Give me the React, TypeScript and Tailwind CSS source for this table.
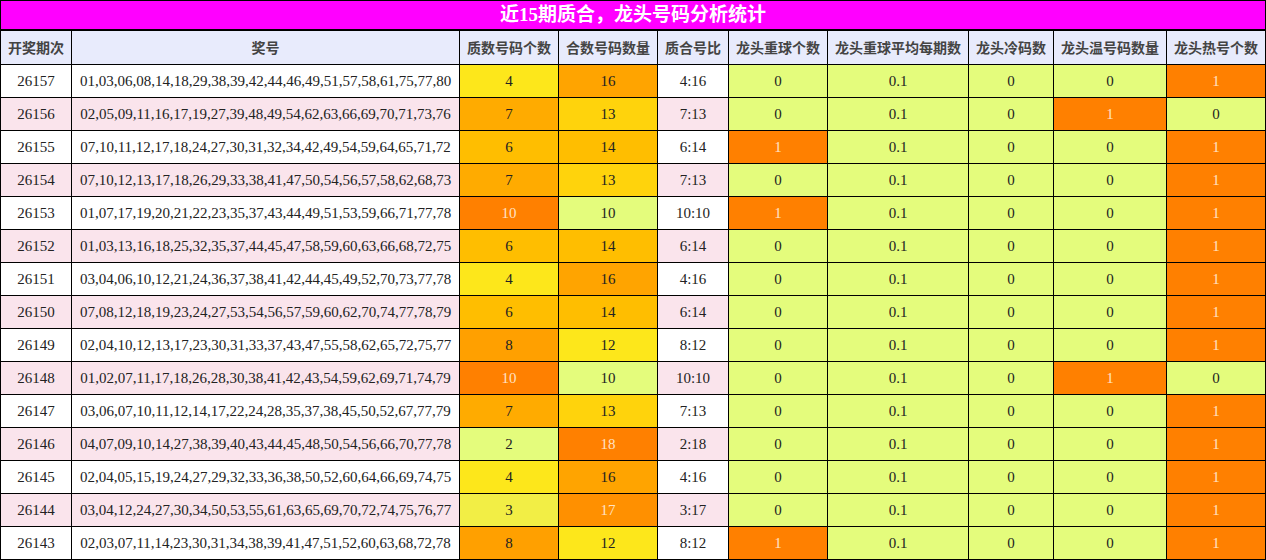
import React from 'react';

type Row = {
  issue: string;
  nums: string;
  prime: number;
  comp: number;
  hot: number; // 龙头重球个数
  warm: number; // 龙头温号码数量
  heat: number; // 龙头热号个数
};

const rows: Row[] = [
  { issue: '26157', nums: '01,03,06,08,14,18,29,38,39,42,44,46,49,51,57,58,61,75,77,80', prime: 4, comp: 16, hot: 0, warm: 0, heat: 1 },
  { issue: '26156', nums: '02,05,09,11,16,17,19,27,39,48,49,54,62,63,66,69,70,71,73,76', prime: 7, comp: 13, hot: 0, warm: 1, heat: 0 },
  { issue: '26155', nums: '07,10,11,12,17,18,24,27,30,31,32,34,42,49,54,59,64,65,71,72', prime: 6, comp: 14, hot: 1, warm: 0, heat: 1 },
  { issue: '26154', nums: '07,10,12,13,17,18,26,29,33,38,41,47,50,54,56,57,58,62,68,73', prime: 7, comp: 13, hot: 0, warm: 0, heat: 1 },
  { issue: '26153', nums: '01,07,17,19,20,21,22,23,35,37,43,44,49,51,53,59,66,71,77,78', prime: 10, comp: 10, hot: 1, warm: 0, heat: 1 },
  { issue: '26152', nums: '01,03,13,16,18,25,32,35,37,44,45,47,58,59,60,63,66,68,72,75', prime: 6, comp: 14, hot: 0, warm: 0, heat: 1 },
  { issue: '26151', nums: '03,04,06,10,12,21,24,36,37,38,41,42,44,45,49,52,70,73,77,78', prime: 4, comp: 16, hot: 0, warm: 0, heat: 1 },
  { issue: '26150', nums: '07,08,12,18,19,23,24,27,53,54,56,57,59,60,62,70,74,77,78,79', prime: 6, comp: 14, hot: 0, warm: 0, heat: 1 },
  { issue: '26149', nums: '02,04,10,12,13,17,23,30,31,33,37,43,47,55,58,62,65,72,75,77', prime: 8, comp: 12, hot: 0, warm: 0, heat: 1 },
  { issue: '26148', nums: '01,02,07,11,17,18,26,28,30,38,41,42,43,54,59,62,69,71,74,79', prime: 10, comp: 10, hot: 0, warm: 1, heat: 0 },
  { issue: '26147', nums: '03,06,07,10,11,12,14,17,22,24,28,35,37,38,45,50,52,67,77,79', prime: 7, comp: 13, hot: 0, warm: 0, heat: 1 },
  { issue: '26146', nums: '04,07,09,10,14,27,38,39,40,43,44,45,48,50,54,56,66,70,77,78', prime: 2, comp: 18, hot: 0, warm: 0, heat: 1 },
  { issue: '26145', nums: '02,04,05,15,19,24,27,29,32,33,36,38,50,52,60,64,66,69,74,75', prime: 4, comp: 16, hot: 0, warm: 0, heat: 1 },
  { issue: '26144', nums: '03,04,12,24,27,30,34,50,53,55,61,63,65,69,70,72,74,75,76,77', prime: 3, comp: 17, hot: 0, warm: 0, heat: 1 },
  { issue: '26143', nums: '02,03,07,11,14,23,30,31,34,38,39,41,47,51,52,60,63,68,72,78', prime: 8, comp: 12, hot: 1, warm: 0, heat: 1 },
];

const LIGHT = 'bg-[#e4fc7c] text-[#222]';
const MAX = 'bg-[#ff8000] text-[#ffe2c4]';

const primeColor: Record<number, string> = {
  2: LIGHT,
  3: 'bg-[#f2ee45] text-[#222]',
  4: 'bg-[#fde71b] text-[#222]',
  6: 'bg-[#ffbe00] text-[#222]',
  7: 'bg-[#ffab00] text-[#222]',
  8: 'bg-[#ffa000] text-[#222]',
  10: MAX,
};

const compColor: Record<number, string> = {
  10: LIGHT,
  12: 'bg-[#fde71b] text-[#222]',
  13: 'bg-[#ffd30c] text-[#222]',
  14: 'bg-[#ffbe00] text-[#222]',
  16: 'bg-[#ffa400] text-[#222]',
  17: 'bg-[#ff9000] text-[#ffe2c4]',
  18: MAX,
};

const flag = (v: number) => (v ? MAX : LIGHT);

const headers = [
  '开奖期次',
  '奖号',
  '质数号码个数',
  '合数号码数量',
  '质合号比',
  '龙头重球个数',
  '龙头重球平均每期数',
  '龙头冷码数',
  '龙头温号码数量',
  '龙头热号个数',
];

const widths = [71, 388, 99, 99, 71, 99, 141, 85, 113, 99];

export default function App() {
  return (
    <div className="w-[1266px] h-[560px] bg-white overflow-hidden">
      <table className="table-fixed border-collapse w-[1266px] font-['Liberation_Serif','Noto_Sans_CJK_SC',serif] text-[15px] text-[#222]">
        <colgroup>
          {widths.map((w, i) => (
            <col key={i} style={{ width: w }} />
          ))}
        </colgroup>
        <thead>
          <tr className="h-[29px]">
            <th
              colSpan={10}
              className="bg-[#ff00ff] border border-black border-b-2 p-0 text-white text-[19px] font-bold leading-none"
            >
              近15期质合，龙头号码分析统计
            </th>
          </tr>
          <tr className="h-[35px] bg-[#e8ebfc]">
            {headers.map((h) => (
              <th
                key={h}
                className="border border-black p-0 font-['Noto_Sans_CJK_SC',sans-serif] text-[14px] font-bold text-[#444] whitespace-nowrap"
              >
                {h}
              </th>
            ))}
          </tr>
        </thead>
        <tbody>
          {rows.map((r, i) => {
            const rowBg = i % 2 === 0 ? 'bg-white' : 'bg-[#fae4ec]';
            const cell = 'border border-black p-0 text-center whitespace-nowrap';
            return (
              <tr key={r.issue} className={`h-[33px] ${rowBg}`}>
                <td className={cell}>{r.issue}</td>
                <td className={cell}>{r.nums}</td>
                <td className={`${cell} ${primeColor[r.prime]}`}>{r.prime}</td>
                <td className={`${cell} ${compColor[r.comp]}`}>{r.comp}</td>
                <td className={cell}>
                  {r.prime}:{r.comp}
                </td>
                <td className={`${cell} ${flag(r.hot)}`}>{r.hot}</td>
                <td className={`${cell} ${LIGHT}`}>0.1</td>
                <td className={`${cell} ${LIGHT}`}>0</td>
                <td className={`${cell} ${flag(r.warm)}`}>{r.warm}</td>
                <td className={`${cell} ${flag(r.heat)}`}>{r.heat}</td>
              </tr>
            );
          })}
        </tbody>
      </table>
    </div>
  );
}
